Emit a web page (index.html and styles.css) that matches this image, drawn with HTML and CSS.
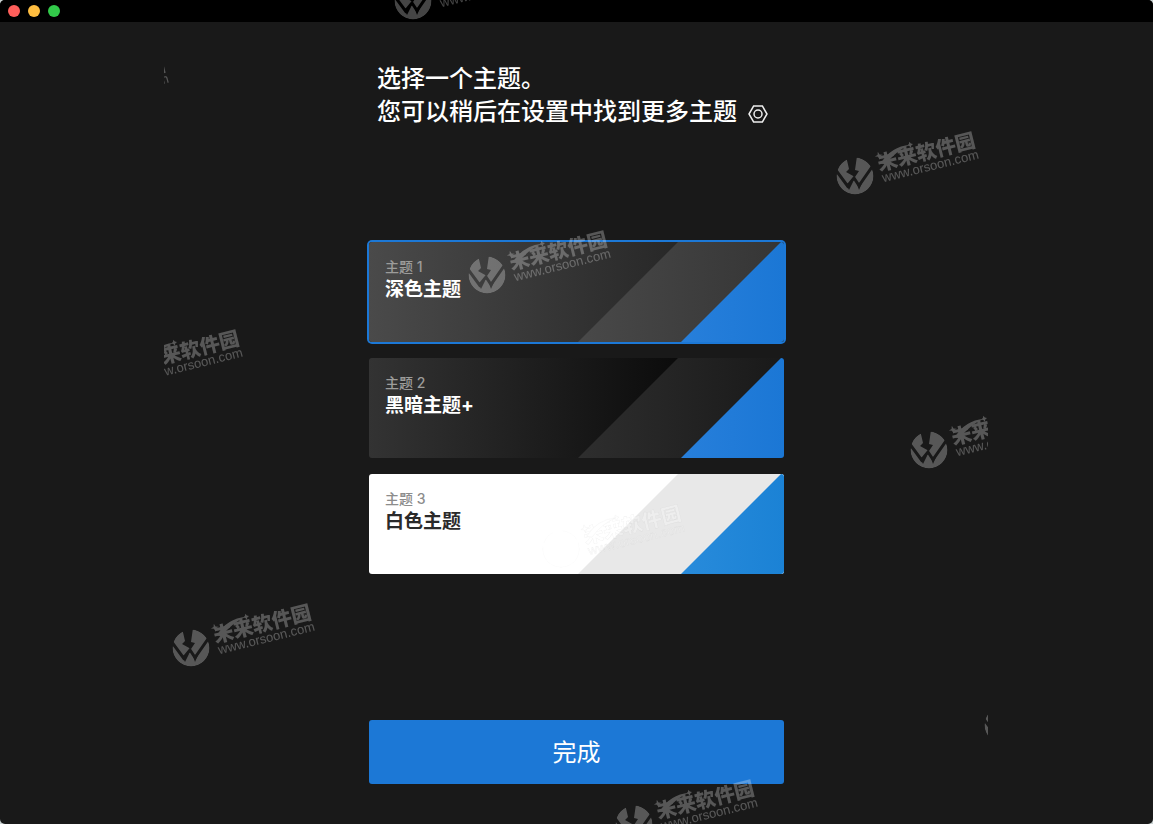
FILE: index.html
```html
<!DOCTYPE html>
<html lang="zh-CN">
<head>
<meta charset="utf-8">
<title>选择主题</title>
<link rel="stylesheet" href="styles.css">
</head>
<body>
<div class="window">
  <header class="titlebar">
    <button class="dot dot-close" type="button" aria-label="关闭"></button>
    <button class="dot dot-min" type="button" aria-label="最小化"></button>
    <button class="dot dot-max" type="button" aria-label="缩放"></button>
  </header>
  <main class="content">
    <h1 class="heading">选择一个主题。<br>您可以稍后在设置中找到更多主题
      <svg class="gear" viewBox="0 0 20 18" aria-hidden="true"><path d="M5.6 1.1h8.8L19 9l-4.6 7.9H5.6L1 9z"/><circle cx="10" cy="9" r="4"/></svg>
    </h1>
    <form class="picker">
      <div class="themes">
        <label class="card card-dark"><input class="radio" type="radio" name="theme" checked><span class="stripe"></span><span class="accent"></span><span class="num">主题 1</span><span class="name">深色主题</span></label>
        <label class="card card-black"><input class="radio" type="radio" name="theme"><span class="stripe"></span><span class="accent"></span><span class="num">主题 2</span><span class="name">黑暗主题+</span></label>
        <label class="card card-white"><input class="radio" type="radio" name="theme"><span class="stripe"></span><span class="accent"></span><span class="num">主题 3</span><span class="name">白色主题</span></label>
      </div>
      <button class="done" type="button">完成</button>
    </form>
  </main>
  <svg class="marks" viewBox="164 0 824 824" aria-hidden="true">
    <defs>
      <mask id="cut" maskUnits="userSpaceOnUse" x="-20" y="-20" width="40" height="40">
        <circle r="18.500" fill="#fff"/>
        <path d="M-9-20-6-7-9-4 0 1 4-5 0-6 2-20z" fill="#000"/>
        <path d="M-20-7-7.500 10-1 2 4 9.500 19-12" fill="none" stroke="#000" stroke-width="3"/>
        <path d="M-9 8-6 14-2 6zM2 8 4 14 8 5z" fill="#000"/>
      </mask>
      <g id="mark">
        <g mask="url(#cut)">
          <circle r="18.500"/>
        </g>
        <g transform="rotate(-14)">
          <text class="mark-name" x="25" y="1">未来软件园</text>
          <text class="mark-url" x="26" y="13">www.orsoon.com</text>
          <path d="M28-6Q42-20 61-17Q46-15 33-4zM27-15l1-3 1 3 3 1-3 1-1 3-1-3-3-1zM60-18l1-2 1 2 2 1-2 1-1 2-1-2-2-1z"/>
        </g>
      </g>
    </defs>
    <use href="#mark" x="413" y="1"/>
    <use href="#mark" x="45" y="100"/>
    <use href="#mark" x="855" y="176"/>
    <use href="#mark" x="487" y="275"/>
    <use href="#mark" x="119" y="374"/>
    <use href="#mark" x="929" y="450"/>
    <use href="#mark" class="mark-faint" x="561" y="549"/>
    <use href="#mark" x="191" y="648"/>
    <use href="#mark" x="1003" y="725"/>
    <use href="#mark" x="634" y="824"/>
  </svg>
</div>
</body>
</html>
```
FILE: styles.css
```css
* { box-sizing: border-box; }

body {
  margin: 0;
  background: #c9d2d2;
  font-family: Inter, "Noto Sans CJK SC", sans-serif;
}

.window {
  position: relative;
  display: flex;
  flex-direction: column;
  min-height: 100vh;
  overflow: hidden;
  background: #191919;
  border-radius: 5px;
}

.titlebar {
  display: flex;
  align-items: center;
  gap: 8px;
  height: 22px;
  padding: 0 8px;
  background: #000;
}

.dot {
  width: 12px;
  height: 12px;
  padding: 0;
  border: 0;
  border-radius: 50%;
}

.dot-close { background: #ff5f5b; }
.dot-min { background: #ffbd40; }
.dot-max { background: #32ca4a; }

.content {
  display: flex;
  flex: 1;
  flex-direction: column;
  width: 100%;
  max-width: 415px;
  margin: 0 auto;
  padding: 38px 0 40px;
}

.heading {
  margin: 0 0 0 8px;
  color: #fff;
  font-family: "Noto Sans CJK SC", sans-serif;
  font-size: 24px;
  font-weight: 500;
  line-height: 33px;
  white-space: nowrap;
}

.gear {
  width: 20px;
  height: 18px;
  margin-left: 6px;
  vertical-align: -3px;
  fill: none;
  stroke: #eee;
  stroke-width: 1.5;
}

.picker {
  display: flex;
  flex: 1;
  flex-direction: column;
  justify-content: space-between;
  margin-top: 116px;
}

.themes {
  display: flex;
  flex-direction: column;
  gap: 16px;
}

.card {
  position: relative;
  display: flex;
  flex-direction: column;
  height: 100px;
  padding: 15px 16px;
  border-radius: 3px;
  color: #fff;
  cursor: pointer;
}

.card:has(.radio:checked) { box-shadow: 0 0 0 2px #1c78d6; }

.card-dark { background: linear-gradient(90deg, #4a4a4a, #272727 75%); }
.card-black { background: linear-gradient(90deg, #333, #0b0b0b 75%); }
.card-white { background: #fff; color: #2a2a2a; }

.radio {
  position: absolute;
  opacity: 0;
}

.stripe,
.accent {
  position: absolute;
  right: 0;
  bottom: 0;
  height: 100%;
  border-radius: 0 3px 3px 0;
  clip-path: polygon(100px 0, 100% 0, 100% 100%, 0 100%);
}

.stripe { width: 206px; }
.accent { width: 103px; background: linear-gradient(90deg, #277fdb, #1b77d5); }

.card-dark .stripe { background: linear-gradient(90deg, #494949, #353535); }
.card-black .stripe { background: linear-gradient(90deg, #2e2e2e, #191919); }
.card-white .stripe { background: #e8e8e8; }
.card-white .accent { background: linear-gradient(90deg, #288bdb, #1b82d5); }

.num {
  color: #9c9c9a;
  font-size: 14px;
  font-weight: 500;
  line-height: 20px;
}

.name {
  font-size: 19px;
  font-weight: 700;
  line-height: 25px;
}

.card-white .num { color: #8c8c8c; }

.done {
  height: 64px;
  padding: 0 0 4px;
  border: 0;
  border-radius: 3px;
  background: #1c78d6;
  color: #fff;
  font: 400 24px "Noto Sans CJK SC", sans-serif;
}

.marks {
  position: absolute;
  top: 0;
  left: calc(50% - 413px);
  width: 824px;
  height: 824px;
  overflow: hidden;
  fill: #fff;
  opacity: 0.27;
  pointer-events: none;
}

.mark-name { font: 900 20px "Noto Sans CJK SC", sans-serif; }
.mark-url { font: 13px "Liberation Sans", sans-serif; }

.mark-faint {
  stroke: #bbb;
  stroke-width: 0.3;
}
```
